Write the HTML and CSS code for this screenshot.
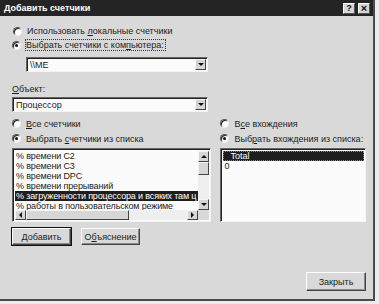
FILE: index.html
```html
<!DOCTYPE html>
<html>
<head>
    <title>Добавить счетчики</title>
    <link rel="stylesheet" href="styles.css">
</head>
<body>
    <div class="dialog">
        <div class="titlebar">
            <span class="title">Добавить счетчики</span>
            <span class="tb-btn">?</span>
            <span class="tb-btn close">×</span>
        </div>
        <div class="content">
            <div class="radio-row first">
                <span class="radio"></span>
                <span>Использовать <u>л</u>окальные счетчики</span>
            </div>
            <div class="radio-row">
                <span class="radio checked"></span>
                <span class="focus">Выбрать счетчики с ком<u>п</u>ьютера:</span>
            </div>
            <div class="combo machine">
                <span class="combo-text">\\ME</span>
                <span class="combo-btn"><i class="arrow down"></i></span>
            </div>
            <div class="label"><u>О</u>бъект:</div>
            <div class="combo object">
                <span class="combo-text">Процессор</span>
                <span class="combo-btn"><i class="arrow down"></i></span>
            </div>

            <div class="columns">
                <div class="col left">
                    <div class="radio-row">
                        <span class="radio"></span>
                        <span><u>В</u>се счетчики</span>
                    </div>
                    <div class="radio-row">
                        <span class="radio checked"></span>
                        <span>Выбрать <u>с</u>четчики из списка</span>
                    </div>
                    <div class="listbox counters">
                        <div class="items">
                            <div class="item">% времени C2</div>
                            <div class="item">% времени C3</div>
                            <div class="item">% времени DPC</div>
                            <div class="item">% времени прерываний</div>
                            <div class="item selected">% загруженности процессора и всяких там ц</div>
                            <div class="item">% работы в пользовательском режиме</div>
                        </div>
                        <div class="vscroll">
                            <span class="sbtn"><i class="arrow up"></i></span>
                            <span class="thumb"></span>
                            <span class="track"></span>
                            <span class="sbtn"><i class="arrow down"></i></span>
                        </div>
                        <div class="hscroll">
                            <span class="sbtn"><i class="arrow left-a"></i></span>
                            <span class="thumb"></span>
                            <span class="track"></span>
                            <span class="sbtn"><i class="arrow right-a"></i></span>
                        </div>
                        <div class="corner"></div>
                    </div>
                </div>
                <div class="col right">
                    <div class="radio-row">
                        <span class="radio"></span>
                        <span>В<u>с</u>е вхождения</span>
                    </div>
                    <div class="radio-row">
                        <span class="radio checked"></span>
                        <span>Выб<u>р</u>ать вхождения из списка:</span>
                    </div>
                    <div class="listbox instances">
                        <div class="item selected total">Total</div>
                        <div class="item">0</div>
                    </div>
                </div>
            </div>

            <div class="buttons">
                <span class="button default">Добавить</span>
                <span class="button">О<u>б</u>ъяснение</span>
            </div>
            <div class="footer">
                <span class="button close-btn">Закрыть</span>
            </div>
        </div>
    </div>
</body>
</html>
```

FILE: styles.css
```css
body {
    margin: 0;
    background-color: #ececec;
    font-family: "Liberation Sans", Arial, sans-serif;
    font-size: 9px;
    color: #1c1c1c;
}
u {
    text-decoration: underline;
    text-underline-offset: 1px;
}
.dialog {
    width: 373px;
    height: 299px;
    background-color: #d9d9d9;
    border-right: 2px solid #4a4a4a;
    border-bottom: 2px solid #4a4a4a;
}
.titlebar {
    height: 16px;
    background-color: #242424;
    display: flex;
    align-items: center;
    padding: 0 3px 0 4px;
    gap: 1px;
}
.title {
    color: #fff;
    font-weight: bold;
    flex: 1;
}
.tb-btn {
    width: 12px;
    height: 11px;
    background-color: #d6d6d6;
    border-top: 1px solid #fff;
    border-left: 1px solid #fff;
    border-right: 1px solid #555;
    border-bottom: 1px solid #555;
    box-sizing: border-box;
    display: flex;
    align-items: center;
    justify-content: center;
    font-weight: bold;
    font-size: 9px;
    color: #111;
}
.tb-btn.close {
    font-size: 11px;
    margin-left: 2px;
}
.content {
    padding: 0 7px 0 12px;
}
.radio-row {
    height: 14px;
    display: flex;
    align-items: center;
    gap: 5px;
    white-space: nowrap;
}
.radio-row.first {
    margin-top: 8px;
}
.radio-row.first .radio {
    margin-left: 1px;
}
.radio {
    width: 9px;
    height: 9px;
    border-radius: 50%;
    background-color: #fff;
    border-top: 1px solid #555;
    border-left: 1px solid #555;
    border-right: 1px solid #eee;
    border-bottom: 1px solid #eee;
    box-shadow: inset 1px 1px 0 #222;
    box-sizing: border-box;
    display: flex;
    align-items: center;
    justify-content: center;
    flex-shrink: 0;
}
.radio.checked::after {
    content: "";
    width: 3px;
    height: 3px;
    border-radius: 50%;
    background-color: #111;
}
.focus {
    outline: 1px dotted #333;
    outline-offset: 0;
    padding-right: 1px;
}
.combo {
    height: 15px;
    background-color: #fbfbfb;
    border-top: 1px solid #666;
    border-left: 1px solid #666;
    border-right: 1px solid #f4f4f4;
    border-bottom: 1px solid #f4f4f4;
    box-shadow: inset 1px 1px 0 #222;
    box-sizing: border-box;
    display: flex;
    align-items: center;
    padding: 0 1px 0 3px;
}
.combo.machine {
    margin: 5px 0 0 14px;
    width: 182px;
}
.combo.object {
    margin-top: 3px;
    width: 196px;
}
.combo-text {
    flex: 1;
}
.combo-btn, .sbtn {
    width: 11px;
    height: 11px;
    background-color: #d6d6d6;
    border-top: 1px solid #f4f4f4;
    border-left: 1px solid #f4f4f4;
    border-right: 1px solid #444;
    border-bottom: 1px solid #444;
    box-sizing: border-box;
    display: flex;
    align-items: center;
    justify-content: center;
}
.arrow {
    width: 0;
    height: 0;
    border: 3px solid transparent;
}
.arrow.down {
    border-top: 3px solid #111;
    border-bottom: none;
}
.arrow.up {
    border-bottom: 3px solid #111;
    border-top: none;
}
.arrow.left-a {
    border-right: 3px solid #111;
    border-left: none;
}
.arrow.right-a {
    border-left: 3px solid #111;
    border-right: none;
}
.label {
    margin-top: 12px;
    height: 10px;
    line-height: 10px;
}
.columns {
    margin-top: 4px;
    display: flex;
    gap: 8px;
}
.col.left {
    width: 200px;
}
.col.right {
    width: 146px;
    padding-left: 1px;
}
.col .radio-row {
    height: 15px;
}
.listbox {
    margin-top: 2px;
    height: 74px;
    background-color: #fbfbfb;
    border-top: 1px solid #666;
    border-left: 1px solid #666;
    border-right: 1px solid #f4f4f4;
    border-bottom: 1px solid #f4f4f4;
    box-shadow: inset 1px 1px 0 #222;
    box-sizing: border-box;
    padding: 2px 1px 1px 2px;
}
.listbox.counters {
    display: grid;
    grid-template-columns: 1fr 11px;
    grid-template-rows: 1fr 10px;
}
.items {
    overflow: hidden;
    letter-spacing: -0.15px;
}
.item {
    height: 10px;
    line-height: 10px;
    padding-left: 1px;
    white-space: nowrap;
    overflow: hidden;
}
.item.selected {
    background-color: #1e1e1e;
    color: #fff;
}
.item.total {
    padding-left: 7px;
    outline: 1px dotted #888;
    outline-offset: -1px;
}
.vscroll {
    display: grid;
    grid-template-rows: 11px 13px 1fr 11px;
    background-color: #efefef;
}
.vscroll .thumb, .hscroll .thumb {
    background-color: #d6d6d6;
    border-top: 1px solid #f4f4f4;
    border-left: 1px solid #f4f4f4;
    border-right: 1px solid #444;
    border-bottom: 1px solid #444;
}
.hscroll {
    display: grid;
    grid-template-columns: 11px 103px 1fr 11px;
    background-color: #efefef;
}
.hscroll .sbtn {
    height: 10px;
}
.corner {
    background-color: #d9d9d9;
}
.buttons {
    margin-top: 6px;
    display: flex;
    gap: 10px;
}
.button {
    width: 59px;
    height: 17px;
    background-color: #d9d9d9;
    border-top: 1px solid #fff;
    border-left: 1px solid #fff;
    border-right: 1px solid #444;
    border-bottom: 1px solid #444;
    box-shadow: inset -1px -1px 0 #888;
    box-sizing: border-box;
    display: flex;
    align-items: center;
    justify-content: center;
}
.button.default {
    outline: 1px solid #111;
}
.footer {
    margin-top: 27px;
    display: flex;
    justify-content: flex-end;
}
.button.close-btn {
    width: 60px;
    height: 19px;
}
```
